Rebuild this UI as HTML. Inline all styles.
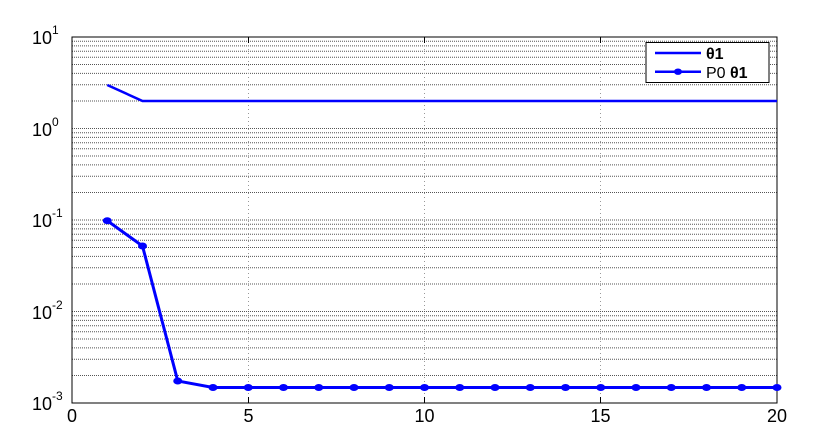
<!DOCTYPE html>
<html><head><meta charset="utf-8"><style>
html,body{margin:0;padding:0;background:#fff;width:831px;height:443px;overflow:hidden}
svg text{font-family:"Liberation Sans",sans-serif;fill:#000}
</style></head><body>
<svg width="831" height="443" viewBox="0 0 831 443" xmlns="http://www.w3.org/2000/svg">
<g stroke="#555" stroke-width="1" stroke-dasharray="1,1" fill="none">
<path d="M72 101H777M72 84.8H777M72 73.4H777M72 64.5H777M72 57.3H777M72 51.2H777M72 45.9H777M72 41.2H777
M72 128.5H777M72 192.5H777M72 176.3H777M72 164.9H777M72 156H777M72 148.8H777M72 142.7H777M72 137.4H777M72 132.7H777
M72 220H777M72 284H777M72 267.8H777M72 256.4H777M72 247.5H777M72 240.3H777M72 234.2H777M72 228.9H777M72 224.2H777
M72 311.5H777M72 375.5H777M72 359.3H777M72 347.9H777M72 339H777M72 331.8H777M72 325.7H777M72 320.4H777M72 315.7H777"/>
</g>
<g stroke="#999" stroke-width="1" stroke-dasharray="1,3"><path d="M248.5 37V403M424.5 37V403M600.5 37V403"/></g>
<rect x="72" y="37" width="705" height="366" fill="none" stroke="#000" stroke-width="1"/>
<g stroke="#000" stroke-width="1"><path d="M248.5 403v-6M424.5 403v-6M600.5 403v-6M248.5 37v6M424.5 37v6M600.5 37v6"/></g>
<g font-size="18">
<text x="32" y="44">10<tspan font-size="12" dy="-10">1</tspan></text>
<text x="32" y="136">10<tspan font-size="12" dy="-10">0</tspan></text>
<text x="32" y="227">10<tspan font-size="12" dy="-10">-1</tspan></text>
<text x="32" y="319">10<tspan font-size="12" dy="-10">-2</tspan></text>
<text x="32" y="410">10<tspan font-size="12" dy="-10">-3</tspan></text>
<text x="72" y="422" text-anchor="middle">0</text>
<text x="248.5" y="422" text-anchor="middle">5</text>
<text x="424.5" y="422" text-anchor="middle">10</text>
<text x="600.5" y="422" text-anchor="middle">15</text>
<text x="777" y="422" text-anchor="middle">20</text>
</g>
<polyline points="107.25,85 142.5,101 777,101" fill="none" stroke="#0000ff" stroke-width="2.5"/>
<polyline points="107.25,220.7 142.5,246 177.75,381 213,387.5 777,387.5" fill="none" stroke="#0000ff" stroke-width="3"/>
<g fill="#0000ff">
<ellipse cx="107.25" cy="220.7" rx="4.5" ry="3.5"/><ellipse cx="142.5" cy="246" rx="4.5" ry="3.5"/><ellipse cx="177.75" cy="381" rx="4.5" ry="3.5"/>
<ellipse cx="213" cy="387.5" rx="4.5" ry="3.5"/><ellipse cx="248.25" cy="387.5" rx="4.5" ry="3.5"/><ellipse cx="283.5" cy="387.5" rx="4.5" ry="3.5"/>
<ellipse cx="318.75" cy="387.5" rx="4.5" ry="3.5"/><ellipse cx="354" cy="387.5" rx="4.5" ry="3.5"/><ellipse cx="389.25" cy="387.5" rx="4.5" ry="3.5"/>
<ellipse cx="424.5" cy="387.5" rx="4.5" ry="3.5"/><ellipse cx="459.75" cy="387.5" rx="4.5" ry="3.5"/><ellipse cx="495" cy="387.5" rx="4.5" ry="3.5"/>
<ellipse cx="530.25" cy="387.5" rx="4.5" ry="3.5"/><ellipse cx="565.5" cy="387.5" rx="4.5" ry="3.5"/><ellipse cx="600.75" cy="387.5" rx="4.5" ry="3.5"/>
<ellipse cx="636" cy="387.5" rx="4.5" ry="3.5"/><ellipse cx="671.25" cy="387.5" rx="4.5" ry="3.5"/><ellipse cx="706.5" cy="387.5" rx="4.5" ry="3.5"/>
<ellipse cx="741.75" cy="387.5" rx="4.5" ry="3.5"/><ellipse cx="777" cy="387.5" rx="4.5" ry="3.5"/>
</g>
<rect x="646" y="42.5" width="123" height="40" fill="#fff" stroke="#000" stroke-width="1"/>
<path d="M655 53H701M655 71.7H701" stroke="#0000ff" stroke-width="2.5"/>
<ellipse cx="678" cy="71.7" rx="4" ry="3.2" fill="#0000ff"/>
<text x="706" y="59" font-size="16" font-weight="bold" font-family="Liberation Sans, DejaVu Sans, sans-serif">θ1</text>
<text x="706" y="78" font-size="16">P0 <tspan font-weight="bold">θ1</tspan></text>
</svg>
</body></html>
